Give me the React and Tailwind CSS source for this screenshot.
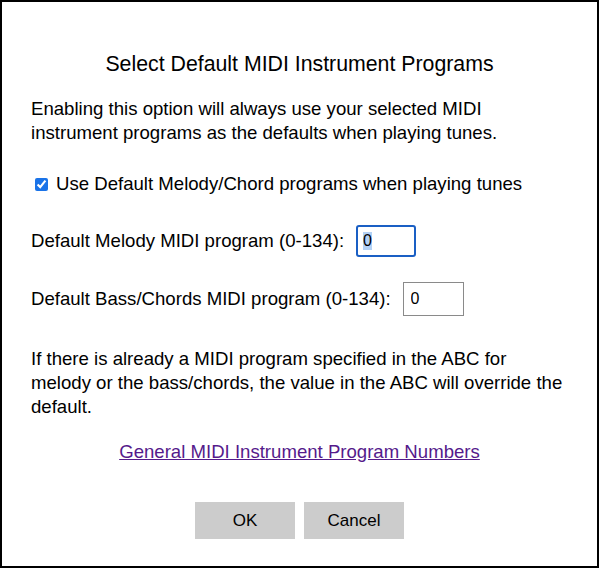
import React, { useEffect, useRef } from 'react';

const App = () => {
  const melodyRef = useRef(null);

  useEffect(() => {
    // 첫 입력칸은 값이 선택된 상태로 보임
    if (melodyRef.current) {
      melodyRef.current.focus();
      melodyRef.current.select();
    }
  }, []);

  return (
    <div className="w-[599px] h-[568px] bg-white border-2 border-black box-border font-['Liberation_Sans',Arial,sans-serif] text-black">
      <div className="flex flex-col px-[29px]">
        <h1 className="mt-[49px] text-center text-[21.3px] leading-[26px]">Select Default MIDI Instrument Programs</h1>

        <p className="mt-[20px] text-[18.6px] leading-[24px]">
          Enabling this option will always use your selected MIDI instrument programs as the defaults when playing tunes.
        </p>

        <div className="mt-[27px] flex items-center">
          <input type="checkbox" defaultChecked className="ml-[4px] w-[13px] h-[13px] accent-[#1a73e8]" />
          <label className="ml-[8px] text-[18.6px] leading-[24px]">Use Default Melody/Chord programs when playing tunes</label>
        </div>

        <div className="mt-[29px] flex items-center">
          <label className="text-[18.6px] leading-[24px]">Default Melody MIDI program (0-134):</label>
          <input
            ref={melodyRef}
            type="text"
            defaultValue="0"
            className="ml-[12px] w-[60px] h-[32px] px-[5px] border-2 border-[#1a5fc4] rounded-[3px] text-[16px] outline-none selection:bg-[#b3d1f5]"
          />
        </div>

        <div className="mt-[25px] flex items-center">
          <label className="text-[18.6px] leading-[24px]">Default Bass/Chords MIDI program (0-134):</label>
          <input
            type="text"
            defaultValue="0"
            className="ml-[12px] w-[61px] h-[34px] px-[7px] border border-[#8a8a8a] text-[16px] outline-none"
          />
        </div>

        <p className="mt-[31px] text-[18.6px] leading-[24px]">
          If there is already a MIDI program specified in the ABC for melody or the bass/chords, the value in the ABC will override the default.
        </p>

        <div className="mt-[21px] text-center">
          <a href="#" className="text-[18.6px] leading-[24px] text-[#551a8b] underline">General MIDI Instrument Program Numbers</a>
        </div>

        <div className="mt-[37px] flex justify-center gap-[9px]">
          <button className="w-[100px] h-[37px] bg-[#cccccc] text-[17px]">OK</button>
          <button className="w-[100px] h-[37px] bg-[#cccccc] text-[17px]">Cancel</button>
        </div>
      </div>
    </div>
  );
};

export default App;
